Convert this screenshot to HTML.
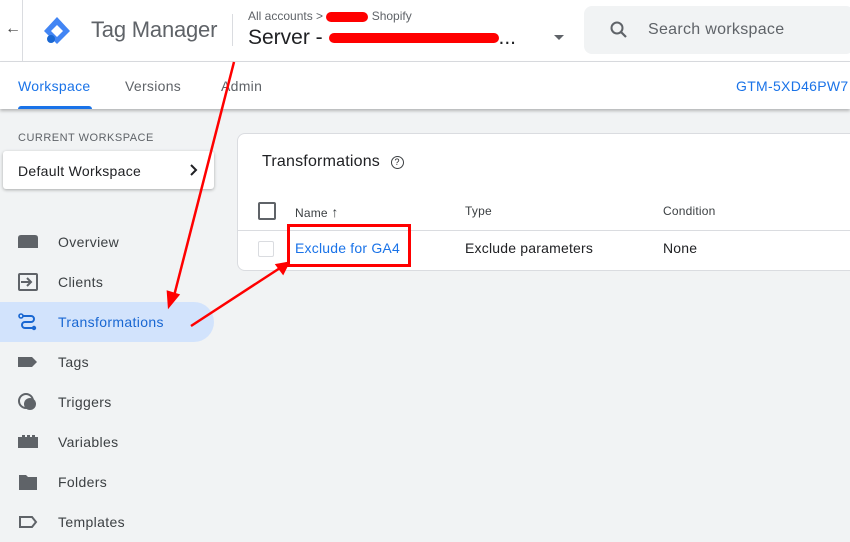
<!DOCTYPE html><html><head><style>
body{margin:0;width:850px;height:542px;overflow:hidden;background:#f1f3f4;font-family:"Liberation Sans",sans-serif;position:relative;color:#3c4043}
.top{position:absolute;left:0;top:0;width:850px;height:61px;background:#fff;border-bottom:1px solid #dadce0}
.tabs{position:absolute;left:0;top:62px;width:850px;height:47px;background:#fff;box-shadow:0 2px 3px rgba(0,0,0,.25)}
.a{position:absolute;white-space:nowrap}
.nav{position:absolute;left:0;width:214px;height:40px;font-size:14px;color:#3c4043;letter-spacing:.35px}
.nav span{position:absolute;left:58px;top:12px}
.nav svg{position:absolute;left:18px;top:10px}
</style></head><body>
<div class="top">
 <div class="a" style="left:5px;top:20px;font-size:16px;color:#444">←</div>
 <div class="a" style="left:22px;top:0;width:1px;height:61px;background:#dadce0"></div>
 <svg class="a" style="left:40px;top:14px" width="34" height="34" viewBox="0 0 34 34"><path d="M17 3 L30 17 L17 30 L4 17Z" fill="#4285f4"/><path d="M17 11 L23 17 L17 23 L11 17Z" fill="#fff"/><circle cx="11" cy="25" r="4" fill="#1967d2"/></svg>
 <div class="a" style="left:91px;top:17px;font-size:22px;color:#5f6368;letter-spacing:-.2px">Tag Manager</div>
 <div class="a" style="left:232px;top:14px;width:1px;height:32px;background:#dadce0"></div>
 <div class="a" style="left:248px;top:9px;font-size:12px;color:#5f6368">All accounts &gt; <span style="display:inline-block;width:42px;height:10px;background:#f00;border-radius:5px;vertical-align:middle"></span> Shopify</div>
 <div class="a" style="left:248px;top:26px;font-size:21px;color:#202124">Server - <span style="display:inline-block;width:170px;height:10px;background:#f00;border-radius:5px;vertical-align:middle"></span>...</div>
 <div class="a" style="left:554px;top:35px;border:5px solid transparent;border-top-color:#5f6368"></div>
 <div class="a" style="left:584px;top:6px;width:270px;height:48px;background:#f1f3f4;border-radius:8px"></div>
 <svg class="a" style="left:609px;top:20px" width="20" height="20" viewBox="0 0 20 20"><circle cx="8" cy="8" r="5.5" fill="none" stroke="#5f6368" stroke-width="2"/><path d="M12 12l5 5" stroke="#5f6368" stroke-width="2.2"/></svg>
 <div class="a" style="left:648px;top:21px;font-size:16px;color:#5f6368;letter-spacing:.3px">Search workspace</div>
</div>
<div class="tabs">
 <div class="a" style="left:18px;top:16px;font-size:14px;color:#1a73e8;letter-spacing:.3px">Workspace</div>
 <div class="a" style="left:18px;top:44px;width:74px;height:3px;background:#1a73e8;border-radius:3px 3px 0 0"></div>
 <div class="a" style="left:125px;top:16px;font-size:14px;color:#5f6368;letter-spacing:.3px">Versions</div>
 <div class="a" style="left:221px;top:16px;font-size:14px;color:#5f6368;letter-spacing:.3px">Admin</div>
 <div class="a" style="left:736px;top:16px;font-size:14px;color:#1a73e8;letter-spacing:.3px">GTM-5XD46PW7</div>
</div>
<div class="a" style="left:18px;top:132px;font-size:11px;color:#5f6368;letter-spacing:.5px">CURRENT WORKSPACE</div>
<div class="a" style="left:3px;top:151px;width:211px;height:38px;background:#fff;border-radius:3px;box-shadow:0 1px 3px rgba(0,0,0,.3)"><span class="a" style="left:15px;top:12px;font-size:14px;color:#202124;letter-spacing:.3px">Default Workspace</span><svg class="a" style="left:186px;top:13px" width="10" height="12"><path d="M2 1l5 5-5 5" fill="none" stroke="#202124" stroke-width="2"/></svg></div>
<div class="nav" style="top:222px"><svg width="20" height="20"><path d="M0 6q0-3 3-3h14q3 0 3 3v10H0z" fill="#5f6368"/></svg><span>Overview</span></div>
<div class="nav" style="top:262px"><svg width="20" height="20"><rect x="1" y="2" width="18" height="16" fill="none" stroke="#5f6368" stroke-width="2" rx="1"/><path d="M3 10h10M9 6l4 4-4 4" stroke="#5f6368" stroke-width="2" fill="none"/></svg><span>Clients</span></div>
<div class="nav" style="top:302px;background:#d2e3fc;border-radius:0 20px 20px 0"><svg width="20" height="20"><circle cx="3" cy="4" r="2" fill="none" stroke="#1967d2" stroke-width="1.6"/><path d="M5 4h8a3 3 0 0 1 0 6H7a3 3 0 0 0 0 6h8" fill="none" stroke="#1967d2" stroke-width="2"/><circle cx="16" cy="16" r="2.2" fill="#1967d2"/></svg><span style="color:#1967d2">Transformations</span></div>
<div class="nav" style="top:342px"><svg width="20" height="20"><path d="M0 5h14l5 5-5 5H0z" fill="#5f6368"/></svg><span>Tags</span></div>
<div class="nav" style="top:382px"><svg width="20" height="20"><circle cx="8" cy="9" r="7" fill="none" stroke="#5f6368" stroke-width="2"/><circle cx="12" cy="12" r="6" fill="#5f6368"/></svg><span>Triggers</span></div>
<div class="nav" style="top:422px"><svg width="20" height="20"><path d="M0 5h4V3h3v2h2V3h3v2h2V3h3v2h3v11H0z" fill="#5f6368"/></svg><span>Variables</span></div>
<div class="nav" style="top:462px"><svg width="20" height="20"><path d="M1 3h7l2 2h9v13H1z" fill="#5f6368"/></svg><span>Folders</span></div>
<div class="nav" style="top:502px"><svg width="20" height="20"><path d="M2 5h12l4 5-4 5H2z" fill="none" stroke="#5f6368" stroke-width="2"/></svg><span>Templates</span></div>
<div class="a" style="left:237px;top:133px;width:620px;height:136px;background:#fff;border:1px solid #dadce0;border-radius:8px">
 <div class="a" style="left:24px;top:19px;font-size:16px;color:#202124;letter-spacing:.2px">Transformations <span style="display:inline-block;width:11px;height:11px;border:1.5px solid #3c4043;border-radius:50%;font-size:9px;text-align:center;line-height:11px;margin-left:6px;vertical-align:1px">?</span></div>
 <div class="a" style="left:20px;top:68px;width:14px;height:14px;border:2px solid #5f6368;border-radius:2px"></div>
 <div class="a" style="left:57px;top:70px;font-size:12px;color:#3c4043;letter-spacing:.2px">Name <b style="font-weight:normal;font-size:14px">↑</b></div>
 <div class="a" style="left:227px;top:70px;font-size:12px;color:#3c4043;letter-spacing:.2px">Type</div>
 <div class="a" style="left:425px;top:70px;font-size:12px;color:#3c4043;letter-spacing:.2px">Condition</div>
 <div class="a" style="left:0;top:96px;width:620px;height:1px;background:#dadce0"></div>
 <div class="a" style="left:20px;top:107px;width:14px;height:14px;border:1.5px solid #dadce0;border-radius:2px"></div>
 <div class="a" style="left:57px;top:106px;font-size:14px;color:#1a73e8;letter-spacing:.2px">Exclude for GA4</div>
 <div class="a" style="left:227px;top:106px;font-size:14px;color:#202124;letter-spacing:.2px">Exclude parameters</div>
 <div class="a" style="left:425px;top:106px;font-size:14px;color:#202124;letter-spacing:.2px">None</div>
</div>
<div class="a" style="left:287px;top:224px;width:124px;height:43px;border:3px solid #f00;box-sizing:border-box"></div>
<svg class="a" style="left:0;top:0" width="850" height="542"><g stroke="#f00" stroke-width="2.5" fill="#f00"><path d="M234 62L174 296"/><path d="M169 306l-1-14 10 3z"/><path d="M191 326L280 268"/><path d="M288 263l-11 2 6 8z"/></g></svg>
</body></html>
